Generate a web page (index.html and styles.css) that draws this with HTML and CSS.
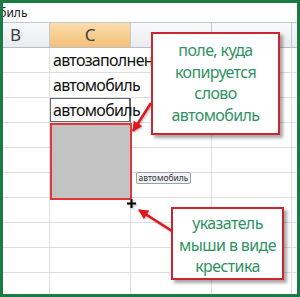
FILE: index.html
```html
<!DOCTYPE html>
<html lang="ru">
<head>
    <meta charset="UTF-8">
    <meta name="viewport" content="width=device-width, initial-scale=1.0">
    <title>Автозаполнение</title>
    <link rel="stylesheet" href="styles.css">
</head>
<body>
    <div class="sheet">
        <div class="formula-bar"><span class="formula-text">автомобиль</span></div>

        <div class="grid">
            <div class="row head">
                <div class="cell col-b">B</div>
                <div class="cell col-c active">C</div>
                <div class="cell col-d"></div>
                <div class="cell col-e"></div>
                <div class="cell col-f"></div>
            </div>
            <div class="row">
                <div class="cell col-b"></div>
                <div class="cell col-c spill">автозаполнение</div>
                <div class="cell col-d"></div>
                <div class="cell col-e"></div>
                <div class="cell col-f"></div>
            </div>
            <div class="row">
                <div class="cell col-b"></div>
                <div class="cell col-c spill">автомобиль</div>
                <div class="cell col-d"></div>
                <div class="cell col-e"></div>
                <div class="cell col-f"></div>
            </div>
            <div class="row">
                <div class="cell col-b"></div>
                <div class="cell col-c copied">автомобиль</div>
                <div class="cell col-d"></div>
                <div class="cell col-e"></div>
                <div class="cell col-f"></div>
            </div>
            <div class="row">
                <div class="cell col-b"></div>
                <div class="cell col-c"></div>
                <div class="cell col-d"></div>
                <div class="cell col-e"></div>
                <div class="cell col-f"></div>
            </div>
            <div class="row">
                <div class="cell col-b"></div>
                <div class="cell col-c"></div>
                <div class="cell col-d"></div>
                <div class="cell col-e"></div>
                <div class="cell col-f"></div>
            </div>
            <div class="row">
                <div class="cell col-b"></div>
                <div class="cell col-c"></div>
                <div class="cell col-d"></div>
                <div class="cell col-e"></div>
                <div class="cell col-f"></div>
            </div>
            <div class="row">
                <div class="cell col-b"></div>
                <div class="cell col-c"></div>
                <div class="cell col-d"></div>
                <div class="cell col-e"></div>
                <div class="cell col-f"></div>
            </div>
            <div class="row">
                <div class="cell col-b"></div>
                <div class="cell col-c"></div>
                <div class="cell col-d"></div>
                <div class="cell col-e"></div>
                <div class="cell col-f"></div>
            </div>
            <div class="row">
                <div class="cell col-b"></div>
                <div class="cell col-c"></div>
                <div class="cell col-d"></div>
                <div class="cell col-e"></div>
                <div class="cell col-f"></div>
            </div>
            <div class="row">
                <div class="cell col-b"></div>
                <div class="cell col-c"></div>
                <div class="cell col-d"></div>
                <div class="cell col-e"></div>
                <div class="cell col-f"></div>
            </div>
        </div>

        <!-- область, куда тянется маркер заполнения -->
        <div class="fill-range"></div>
        <div class="tooltip">автомобиль</div>

        <svg class="arrows" width="294" height="291" viewBox="0 0 294 291">
            <defs>
                <marker id="head" viewBox="0 0 10 10" refX="9" refY="5" markerWidth="5" markerHeight="4" orient="auto">
                    <path d="M0,0 L10,5 L0,10 z" fill="#e3141c"/>
                </marker>
            </defs>
            <line x1="148" y1="100" x2="130" y2="128" stroke="#e3141c" stroke-width="2.5" marker-end="url(#head)"/>
            <line x1="169" y1="228" x2="136" y2="207" stroke="#e3141c" stroke-width="2.5" marker-end="url(#head)"/>
            <path d="M124 200.5 h9 M128.5 196 v9" stroke="#000" stroke-width="2"/>
        </svg>

        <div class="callout callout-top">поле, куда<br>копируется<br>слово<br>автомобиль</div>
        <div class="callout callout-bottom">указатель<br>мыши в виде<br>крестика</div>
    </div>
</body>
</html>
```

FILE: styles.css
```css
body {
    margin: 0;
    padding: 0;
    background: #fff;
    font-family: "Noto Sans", "Open Sans", sans-serif;
}
.sheet {
    position: relative;
    width: 300px;
    height: 297px;
    border: 3px solid #1b7b45;
    box-sizing: border-box;
    overflow: hidden;
    background: #fff;
}
.formula-bar {
    height: 19px;
    border-bottom: 1px solid #c4c8ce;
    font-size: 12px;
    line-height: 19px;
    color: #222;
    white-space: nowrap;
    overflow: hidden;
}
.formula-text {
    margin-left: -46px;
}
.row {
    display: flex;
    height: 25px;
}
.cell {
    flex: none;
    height: 24px;
    border-right: 1px solid #dadde1;
    border-bottom: 1px solid #dadde1;
    font-size: 16px;
    letter-spacing: -0.7px;
    line-height: 24px;
    color: #111;
    white-space: nowrap;
    padding-left: 3px;
    box-sizing: content-box;
}
.col-b { width: 43px; }
.col-c { width: 77px; }
.col-d { width: 77px; }
.col-e { width: 76px; }
.col-f { width: 20px; }
.head .cell {
    background: linear-gradient(#f8f9fa, #e9ecef);
    border-right-color: #c3c8cf;
    border-bottom-color: #b9bec6;
    color: #3a3f45;
    font-size: 17px;
    letter-spacing: 0;
}
.head .col-b {
    padding-left: 7px;
    width: 39px;
}
.head .active {
    background: linear-gradient(#fbdcaa, #f4c07a);
    text-align: center;
    padding-left: 0;
    width: 80px;
}
.spill {
    border-right-color: transparent;
}
.copied {
    box-shadow: inset 0 0 0 1px #6a6a6a;
    border-right-color: #6a6a6a;
}
.fill-range {
    position: absolute;
    left: 47px;
    top: 120px;
    width: 78px;
    height: 73px;
    background: #c3c3c3;
    border: 2px solid #e2353c;
}
.tooltip {
    position: absolute;
    left: 133px;
    top: 169px;
    width: 53px;
    height: 10px;
    border: 1px solid #9aa0a8;
    border-radius: 2px;
    background: #f1f2f5;
    font-size: 8.5px;
    line-height: 10px;
    color: #333;
    text-align: center;
}
.arrows {
    position: absolute;
    left: 0;
    top: 0;
    filter: drop-shadow(1px 1px 1px rgba(0, 0, 0, 0.3));
}
.callout {
    position: absolute;
    background: #fff;
    border: 2px solid #cc2530;
    box-shadow: 3px 3px 3px rgba(0, 0, 0, 0.35);
    color: #2f9263;
    font-size: 16px;
    letter-spacing: -0.6px;
    line-height: 21.5px;
    text-align: center;
    white-space: nowrap;
    box-sizing: border-box;
}
.callout-top {
    left: 148px;
    top: 29px;
    width: 129px;
    height: 103px;
    padding-top: 6px;
}
.callout-bottom {
    left: 168px;
    top: 204px;
    width: 113px;
    height: 73px;
    padding-top: 4px;
}
```
